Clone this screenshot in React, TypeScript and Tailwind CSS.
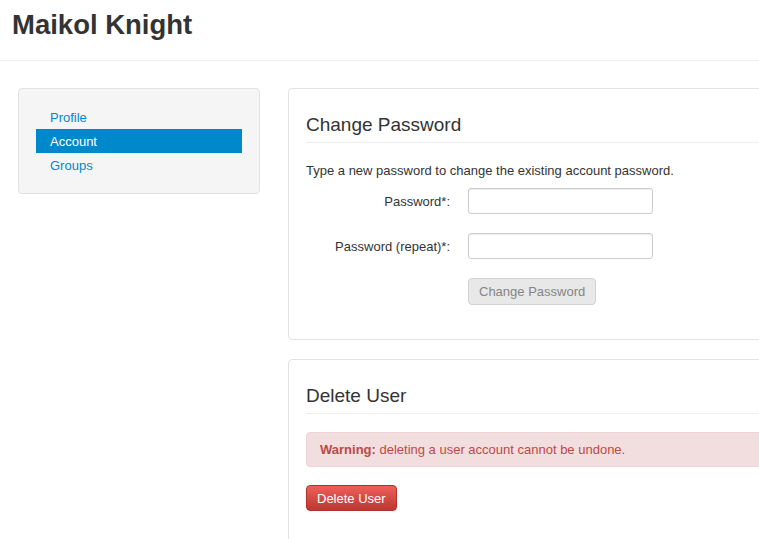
export default function App() {
  return (
    <div
      className="w-full h-[539px] overflow-hidden bg-white text-[#333] text-[13px]"
      style={{ fontFamily: '"Liberation Sans", Arial, sans-serif' }}
    >
      {/* Header */}
      <header className="border-b border-[#eeeeee] pt-[10px] pb-[20px] px-[12px]">
        <h1 className="text-[27.5px] leading-[30px] font-bold text-[#333]">Maikol Knight</h1>
      </header>

      <div className="flex items-start mt-[27px] pl-[18px] gap-[28px]">
        {/* Sidebar */}
        <aside className="w-[242px] shrink-0 bg-[#f5f5f5] border border-[#e3e3e3] rounded-[4px] px-[17px] pt-[16px] pb-[16px]">
          <ul>
            <li>
              <a href="#" className="block px-[14px] pt-[1px] h-[24px] leading-[24px] text-[#0088cc]">Profile</a>
            </li>
            <li>
              <a href="#" className="block px-[14px] pt-[1px] h-[24px] leading-[24px] bg-[#0088cc] text-white">Account</a>
            </li>
            <li>
              <a href="#" className="block px-[14px] pt-[1px] h-[24px] leading-[24px] text-[#0088cc]">Groups</a>
            </li>
          </ul>
        </aside>

        {/* Main */}
        <main className="w-[500px] shrink-0 flex flex-col gap-[19px]">
          <section className="border border-[#e3e3e3] rounded-[4px] px-[17px] pt-[24px] pb-[34px]">
            <h3 className="text-[19px] leading-[24px] pb-[5px] border-b border-[#eeeeee]">Change Password</h3>
            <p className="mt-[19px] leading-[18px]">
              Type a new password to change the existing account password.
            </p>
            <div className="mt-[8px] flex flex-col gap-[19px]">
              <div className="flex items-center">
                <label className="w-[144px] text-right pt-[2px]">Password*:</label>
                <input
                  type="password"
                  className="ml-[18px] w-[185px] h-[26px] border border-[#cccccc] rounded-[3px] shadow-[inset_0_1px_1px_rgba(0,0,0,0.075)] px-[6px] outline-none"
                />
              </div>
              <div className="flex items-center">
                <label className="w-[144px] text-right pt-[2px]">Password (repeat)*:</label>
                <input
                  type="password"
                  className="ml-[18px] w-[185px] h-[26px] border border-[#cccccc] rounded-[3px] shadow-[inset_0_1px_1px_rgba(0,0,0,0.075)] px-[6px] outline-none"
                />
              </div>
              <div className="flex">
                <button
                  disabled
                  className="ml-[162px] h-[27px] px-[10px] pt-[1px] border border-[#d2d2d2] rounded-[4px] bg-[#e8e8e8] text-[#858585]"
                >
                  Change Password
                </button>
              </div>
            </div>
          </section>

          <section className="border border-[#e3e3e3] rounded-[4px] px-[17px] pt-[24px] pb-[40px]">
            <h3 className="text-[19px] leading-[24px] pb-[5px] border-b border-[#eeeeee]">Delete User</h3>
            <div className="mt-[18px] h-[35px] flex items-center bg-[#f2dede] border border-[#eed3d7] rounded-[4px] px-[13px] pt-[1px] text-[#b94a48]">
              <span>
                <strong>Warning:</strong> deleting a user account cannot be undone.
              </span>
            </div>
            <button className="mt-[18px] h-[26px] px-[10px] pt-[1px] rounded-[4px] border border-[#b3312b] bg-gradient-to-b from-[#ee5f5b] to-[#bd362f] text-white">
              Delete User
            </button>
          </section>
        </main>
      </div>
    </div>
  )
}
